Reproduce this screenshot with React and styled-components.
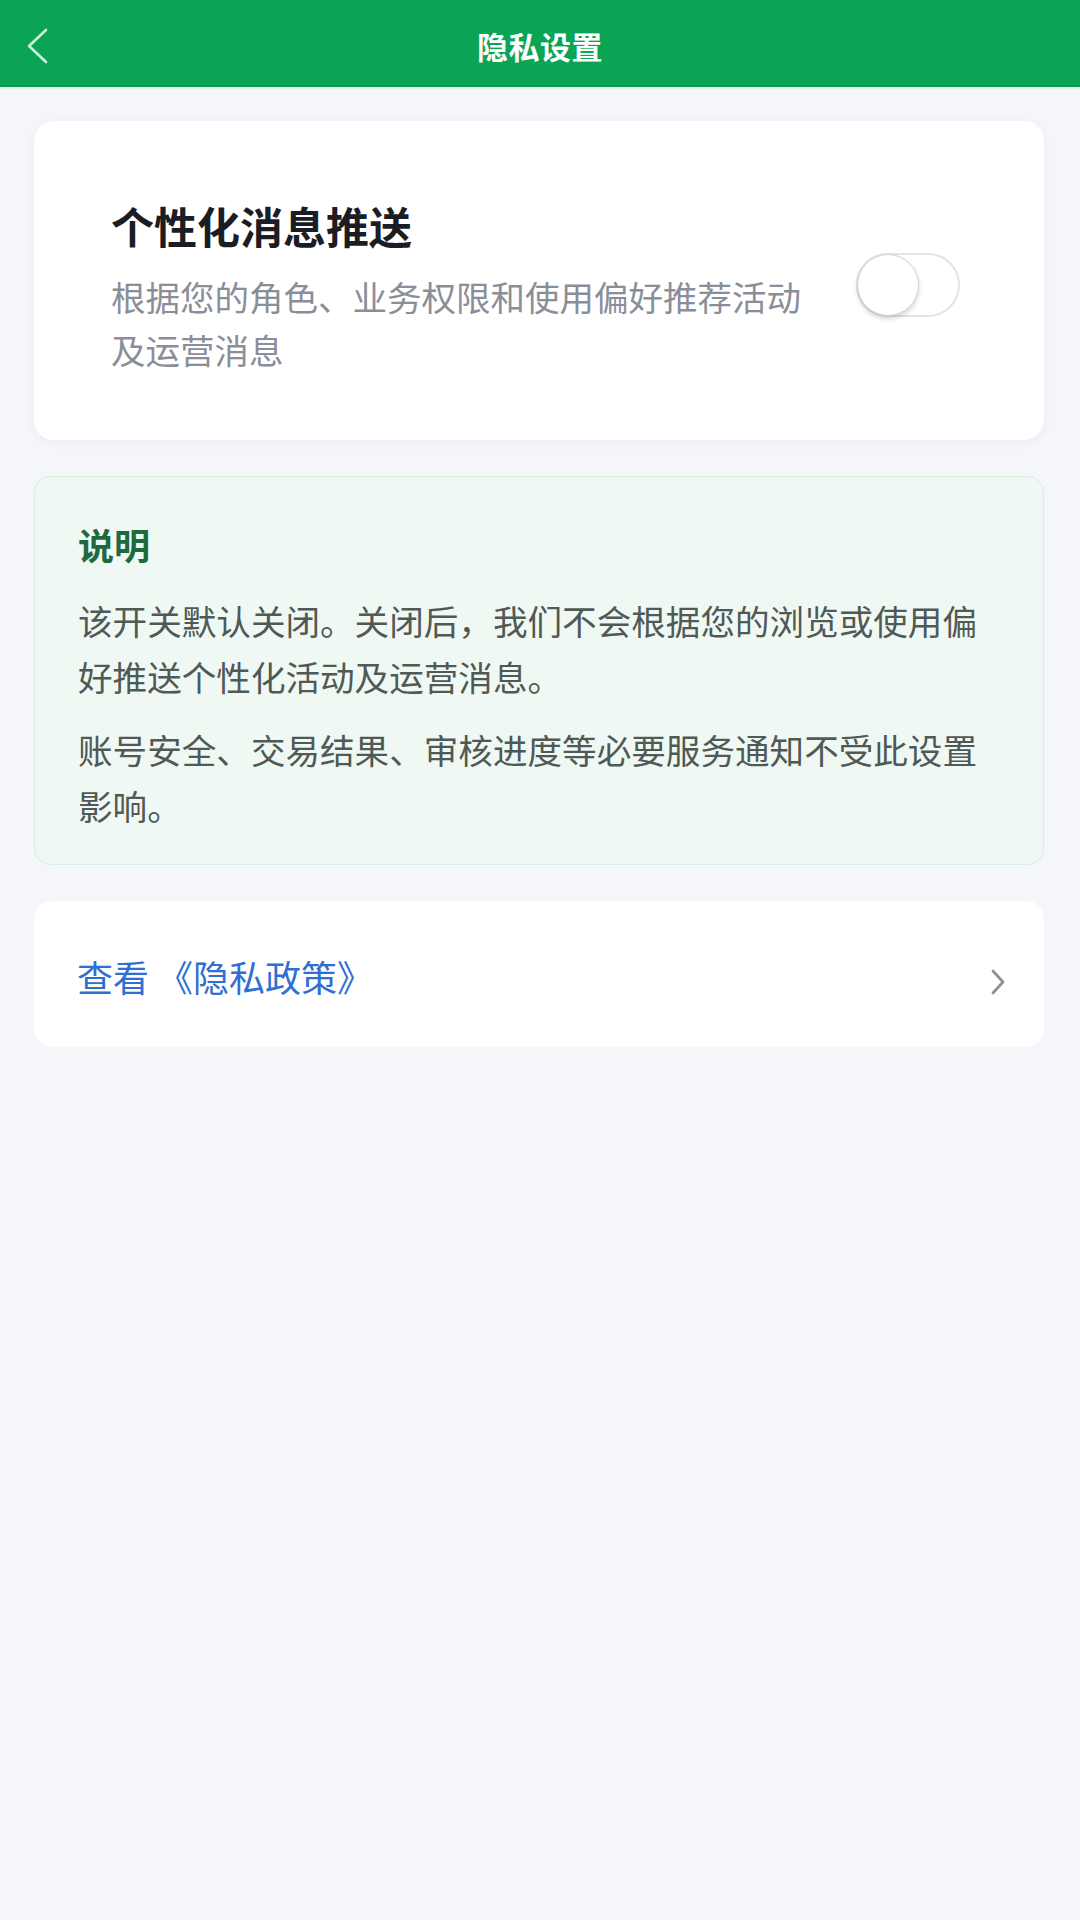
import React, { useState } from 'react';
import styled, { createGlobalStyle } from 'styled-components';

const GlobalStyle = createGlobalStyle`
  html, body {
    margin: 0;
    padding: 0;
    background: #f4f6fa;
  }
  body {
    font-family: "Noto Sans CJK SC", "Noto Sans", sans-serif;
  }
  * {
    box-sizing: border-box;
  }
`;

const Page = styled.div`
  min-height: 1920px;
  background: #f4f6fa;
`;

const Header = styled.header`
  height: 87px;
  background: #0aa454;
  border-bottom: 2px solid #089a4d;
  box-shadow: 0 2px 0 #e2f4ec;
  display: grid;
  grid-template-columns: 87px 1fr 87px;
  align-items: center;
`;

const BackButton = styled.button`
  border: none;
  background: none;
  padding: 6px 0 0 25px;
  height: 100%;
  display: flex;
  align-items: center;
  cursor: pointer;
`;

const HeaderTitle = styled.h1`
  margin: 0;
  padding-top: 6px;
  text-align: center;
  color: #ffffff;
  font-size: 31px;
  font-weight: 700;
  letter-spacing: 0.5px;
`;

const Main = styled.main`
  padding: 34px 36px 34px 34px;
  display: flex;
  flex-direction: column;
  gap: 36px;
`;

const SettingCard = styled.section`
  background: #ffffff;
  border-radius: 20px;
  box-shadow: 0 2px 10px rgba(30, 40, 60, 0.05);
  padding: 76px 84px 64px 77px;
  display: flex;
  align-items: center;
  gap: 44px;
`;

const SettingText = styled.div`
  flex: 1;
  min-width: 0;
`;

const SettingTitle = styled.h2`
  margin: 0 0 16px 0;
  font-size: 43px;
  line-height: 57px;
  font-weight: 700;
  color: #1a1d24;
`;

const SettingDesc = styled.p`
  margin: 0;
  font-size: 34.5px;
  line-height: 53px;
  color: #8a8e98;
`;

const Switch = styled.button`
  flex: none;
  width: 104px;
  height: 64px;
  padding: 0;
  margin-top: -4px;
  border-radius: 32px;
  border: 2px solid ${({ $on }) => ($on ? '#0aa454' : '#e4e4e6')};
  background: ${({ $on }) => ($on ? '#0aa454' : '#ffffff')};
  display: flex;
  align-items: center;
  justify-content: ${({ $on }) => ($on ? 'flex-end' : 'flex-start')};
  cursor: pointer;
`;

const Knob = styled.span`
  width: 62px;
  height: 62px;
  margin: -1px;
  border-radius: 50%;
  background: #ffffff;
  border: 1px solid #d2d2d4;
  box-shadow: 0 3px 5px rgba(0, 0, 0, 0.16);
`;

const NoteCard = styled.section`
  background: #f0f8f3;
  border: 1.5px solid #d9ede0;
  border-radius: 16px;
  padding: 40px 44px 31px 43px;
`;

const NoteTitle = styled.h3`
  margin: 0 0 21px 0;
  font-size: 36px;
  line-height: 54px;
  font-weight: 700;
  color: #1d6a3f;
`;

const NoteText = styled.p`
  margin: 0;
  font-size: 34.6px;
  line-height: 56px;
  color: #4f5955;

  & + & {
    margin-top: 17px;
  }
`;

const LinkCard = styled.a`
  background: #ffffff;
  border-radius: 18px;
  height: 146px;
  padding: 0 38px 0 43px;
  display: flex;
  align-items: center;
  justify-content: space-between;
  text-decoration: none;
  cursor: pointer;
`;

const LinkText = styled.span`
  font-size: 36px;
  line-height: 50px;
  color: #2f6fd2;
  padding-top: 4px;
`;

const Chevron = styled.svg`
  margin-top: 16px;
`;

export default function App() {
  const [enabled, setEnabled] = useState(false);

  return (
    <Page>
      <GlobalStyle />
      <Header>
        <BackButton aria-label="返回">
          <svg width="24" height="38" viewBox="0 0 24 38" fill="none">
            <path d="M21 3 L4 19 L21 35" stroke="#c9f3d8" strokeWidth="2.6" strokeLinecap="round" strokeLinejoin="round" />
          </svg>
        </BackButton>
        <HeaderTitle>隐私设置</HeaderTitle>
        <span />
      </Header>

      <Main>
        <SettingCard>
          <SettingText>
            <SettingTitle>个性化消息推送</SettingTitle>
            <SettingDesc>根据您的角色、业务权限和使用偏好推荐活动及运营消息</SettingDesc>
          </SettingText>
          <Switch $on={enabled} onClick={() => setEnabled(!enabled)} aria-label="个性化消息推送">
            <Knob />
          </Switch>
        </SettingCard>

        <NoteCard>
          <NoteTitle>说明</NoteTitle>
          <NoteText>该开关默认关闭。关闭后，我们不会根据您的浏览或使用偏好推送个性化活动及运营消息。</NoteText>
          <NoteText>账号安全、交易结果、审核进度等必要服务通知不受此设置影响。</NoteText>
        </NoteCard>

        <LinkCard>
          <LinkText>查看 《隐私政策》</LinkText>
          <Chevron width="16" height="28" viewBox="0 0 16 28" fill="none">
            <path d="M3 3 L13 14 L3 25" stroke="#8e9198" strokeWidth="2.8" strokeLinecap="round" strokeLinejoin="round" />
          </Chevron>
        </LinkCard>
      </Main>
    </Page>
  );
}
